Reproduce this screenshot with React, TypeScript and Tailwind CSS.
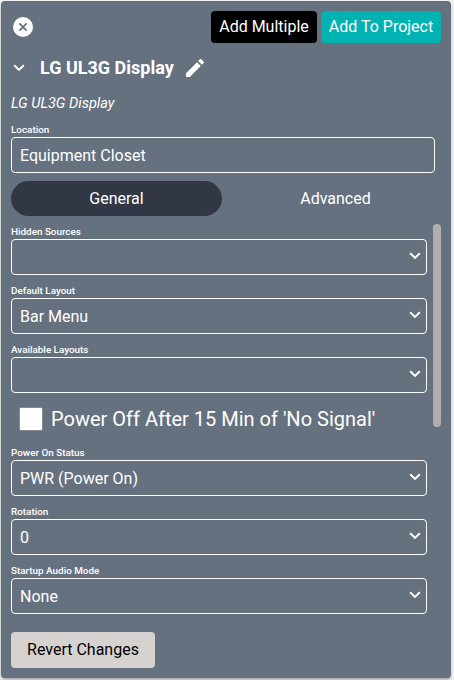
import React from "react";

const Chevron = ({ className = "" }: { className?: string }) => (
  <svg className={className} width="12" height="8" viewBox="0 0 12 8" fill="none" stroke="white" strokeWidth="2">
    <path d="M1.2 1.2 6 5.9 10.8 1.2" />
  </svg>
);

const Label = ({ children }: { children: React.ReactNode }) => (
  <div className="h-[15px] text-[9.9px] leading-[15px] font-medium">{children}</div>
);

const SelectField = ({ label, value = "" }: { label: string; value?: string }) => (
  <div className="mb-2">
    <Label>{label}</Label>
    <div className="flex h-9 items-center justify-between rounded-[4px] border border-white pr-[5px] pl-2">
      <span className="pt-0.5">{value}</span>
      <Chevron className="mb-[2px]" />
    </div>
  </div>
);

export default function App() {
  return (
    <div className="h-[680px] w-[454px] overflow-hidden bg-[#f3f3f3] pt-px pl-px font-['Roboto',sans-serif] text-base text-white">
      <div className="flex h-[677px] w-[450px] flex-col rounded-[4px] bg-[#66717f] px-[10px] pt-[10px] shadow-[0_2px_3px_rgba(0,0,0,0.3)]">
        <div className="flex h-8 items-center">
          <svg className="ml-[2px]" width="20" height="20" viewBox="0 0 20 20">
            <circle cx="10" cy="10" r="10" fill="white" />
            <path d="M6.4 6.4 13.6 13.6M13.6 6.4 6.4 13.6" stroke="#66717f" strokeWidth="1.8" />
          </svg>
          <button className="ml-auto h-8 w-[106px] rounded-[4px] bg-black">Add Multiple</button>
          <button className="ml-1 h-8 w-[120px] rounded-[4px] bg-[#00b2b2]">Add To Project</button>
        </div>

        <div className="mt-[9px] flex h-8 items-center">
          <Chevron className="ml-[2px]" />
          <h1 className="ml-[15px] text-[18px] leading-8 font-bold">LG UL3G Display</h1>
          <svg className="ml-[9px]" width="24" height="24" viewBox="0 0 24 24" fill="white">
            <path d="M3 17.25V21h3.75L17.81 9.94l-3.75-3.75L3 17.25zM20.71 7.04a1 1 0 0 0 0-1.41l-2.34-2.34a1 1 0 0 0-1.41 0l-1.83 1.83 3.75 3.75 1.83-1.83z" />
          </svg>
        </div>

        <div className="mt-[10px] h-5 text-[14.5px] leading-5 italic">LG UL3G Display</div>

        <div className="mt-2 w-[424px]">
          <Label>Location</Label>
          <div className="flex h-9 items-center rounded-[4px] border border-white px-2 pt-0.5">Equipment Closet</div>
        </div>

        <div className="mt-2 flex h-[35px] justify-between">
          <button className="w-[211px] rounded-full bg-[#313745]">General</button>
          <button className="w-[211px]">Advanced</button>
        </div>

        <div className="mt-2 flex h-[398px]">
          <div className="w-[416px]">
            <SelectField label="Hidden Sources" />
            <SelectField label="Default Layout" value="Bar Menu" />
            <SelectField label="Available Layouts" />
            <div className="mb-2 flex h-9 items-center pl-2">
              <span className="h-6 w-6 rounded-[2px] border border-[#858b93] bg-white" />
              <span className="ml-2 text-xl">Power Off After 15 Min of 'No Signal'</span>
            </div>
            <SelectField label="Power On Status" value="PWR (Power On)" />
            <SelectField label="Rotation" value="0" />
            <SelectField label="Startup Audio Mode" value="None" />
          </div>
          <div className="ml-[6px] h-[203px] w-2 rounded-full bg-[#b2adb1]" />
        </div>

        <button className="mt-[10px] h-9 w-36 rounded-[4px] bg-[#d6d2cf] text-black">Revert Changes</button>
      </div>
    </div>
  );
}
